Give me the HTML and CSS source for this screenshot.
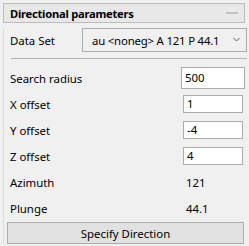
FILE: index.html
```html
<!DOCTYPE html>
<html>
<head>
<meta charset="utf-8">
<link rel="stylesheet" href="styles.css">
</head>
<body>
<div class="panel">
  <div class="header">
    <span class="title">Directional parameters</span>
    <span class="collapse"></span>
  </div>
  <div class="body">
    <div class="row dataset">
      <span class="label">Data Set</span>
      <div class="select"><span class="select-text">au &lt;noneg&gt; A 121 P 44.1</span>
        <svg class="chev" width="7" height="5" viewBox="0 0 7 5"><path d="M0.5 1 L3.5 4 L6.5 1" fill="none" stroke="#606060" stroke-width="1"/></svg>
      </div>
    </div>
    <div class="sep"></div>
    <div class="fields">
      <div class="row"><span class="label">Search radius</span><div class="input wide">500</div></div>
      <div class="row"><span class="label">X offset</span><div class="input">1</div></div>
      <div class="row"><span class="label">Y offset</span><div class="input">-4</div></div>
      <div class="row"><span class="label">Z offset</span><div class="input">4</div></div>
      <div class="row"><span class="label">Azimuth</span><span class="value">121</span></div>
      <div class="row"><span class="label">Plunge</span><span class="value">44.1</span></div>
    </div>
    <button class="btn">Specify Direction</button>
  </div>
</div>
</body>
</html>
```
FILE: styles.css
```css
* { box-sizing: border-box; }
html, body { margin: 0; padding: 0; }
body {
  background: #f0f0f0;
  font-family: "Noto Sans", "Open Sans", sans-serif;
  font-size: 11.4px;
  color: #000;
  width: 249px;
  height: 246px;
  overflow: hidden;
}
.panel { padding: 3px 4px 0 3px; }
.header {
  height: 20px;
  border: 1px solid #bcbcbc;
  background: #e8e8e8;
  display: flex;
  align-items: center;
  justify-content: space-between;
  padding: 0 6px 0 6px;
}
.title { font-weight: bold; font-size: 11.2px; letter-spacing: -0.25px; }
.collapse { width: 12px; height: 2px; background: #c4c4c4; margin-right: 0; }
.body {
  border-left: 1px solid #dcdcdc;
  margin-top: 5px;
  padding: 0 0 0 2px;
}
.row { display: flex; align-items: center; justify-content: space-between; }
.label { padding-left: 4px; padding-top: 1px; }
.dataset { height: 24px; }
.select {
  width: 165px;
  height: 24px;
  border: 1px solid #adadad;
  background: #f0f0f0;
  display: flex;
  align-items: center;
  justify-content: space-between;
  padding: 0 6px 0 9px;
  margin-right: -2px;
  white-space: nowrap;
}
.select-text { letter-spacing: -0.2px; }
.chev { margin-top: -2px; flex-shrink: 0; }
.sep { height: 1px; background: #b4b4b4; margin: 6px -2px 6px 5px; }
.fields .row { height: 26px; }
.input {
  width: 60px;
  height: 18px;
  border: 1px solid #adadad;
  background: #fff;
  padding-left: 3px;
  line-height: 16px;
  margin-right: 2px;
}
.input.wide { width: 64px; height: 22px; line-height: 20px; margin-right: 0; }
.value { width: 60px; margin-right: 2px; padding-left: 3px; padding-top: 1px; }
.btn {
  display: block;
  width: 237px;
  height: 22px;
  margin: 1px 0 0 1px;
  border: 1px solid #adadad;
  background: #e1e1e1;
  font-family: inherit;
  font-size: 11.4px;
  color: #000;
  padding: 0;
}
```
